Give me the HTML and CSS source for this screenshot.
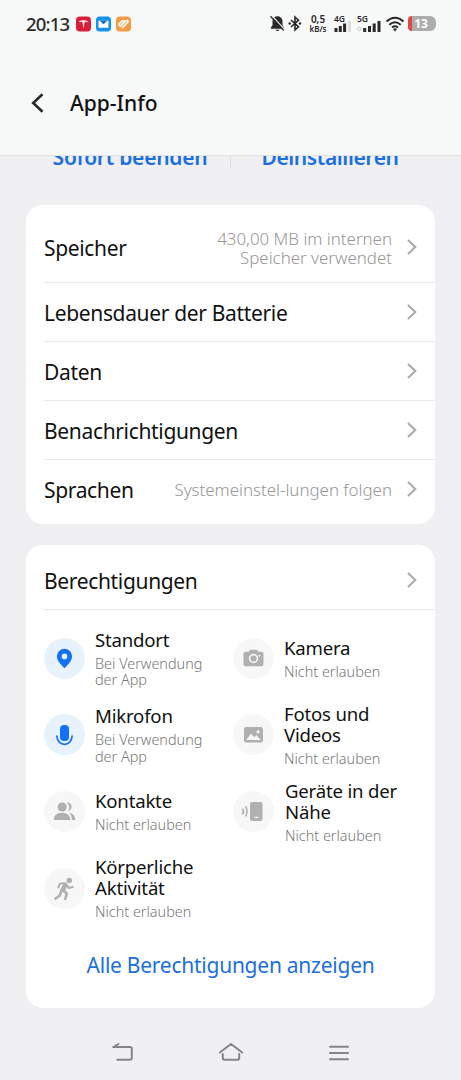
FILE: index.html
```html
<!DOCTYPE html>
<html lang="de">
<head>
<meta charset="utf-8">
<title>App-Info</title>
<link rel="stylesheet" href="styles.css">
</head>
<body>
<svg class="defs" width="0" height="0"><symbol id="chev" viewBox="0 0 12 18"><path d="M2 2l7.300 7L2 16" fill="none" stroke="#aaa" stroke-width="2"/></symbol></svg>
<div class="screen">
  <header class="header">
    <div class="status">
      <span class="clock">20:13</span>
      <svg class="badge" viewBox="0 0 16 16"><rect width="16" height="16" rx="4" fill="#d91f3c"/><path d="M3.300 5q4.700-2 9.400 0l-.6 1.200q-1.500-.8-2.800-.8L8 12.800 6.700 5.400q-1.300 0-2.800.8z" fill="#fff"/></svg>
      <svg class="badge" viewBox="0 0 16 16"><rect width="16" height="16" rx="4" fill="#1691ed"/><path d="M2.700 4.500h10.600v7.500H2.700z" fill="#fff"/><path d="M4 4.500h8L8 8.300z" fill="#1567bb"/></svg>
      <svg class="badge" viewBox="0 0 16 16"><rect width="16" height="16" rx="4" fill="#f59b43"/><path d="M3.300 7.800l2.900-3q1-1 2 0M3.300 7.800q-.3 1.500 1.300 2.500l5.600-5.600M6.700 12l6-6q.6-1.200-.7-1.800" fill="none" stroke="#fff" stroke-width="1.800" stroke-linecap="round"/></svg>
      <span class="spacer"></span>
      <svg class="bell" viewBox="0 0 15 17"><path d="M7.500 1.200a5 5 0 0 0-5 5v4L.8 12.800v1h13.400v-1l-1.700-2.600v-4a5 5 0 0 0-5-5zM5.500 14.700a2.100 1.700 0 0 0 4 0z" fill="#29292b"/><path d="M1.500.3l13.500 14.500" stroke="#f7f7f7" stroke-width="1.200"/><path d="M.5 1.300l13.300 14.200" stroke="#29292b" stroke-width="1.300"/></svg>
      <svg class="bt" viewBox="0 0 14 17"><path d="M3 5l7.500 6.800L7 15V2l3.500 3.200L3 12" fill="none" stroke="#29292b" stroke-width="1.600"/><circle cx="1.700" cy="8.500" r="1.200" fill="#29292b"/><circle cx="12" cy="8.500" r="1.200" fill="#29292b"/></svg>
      <span class="rate"><b>0,5</b><b class="unit">kB/s</b></span>
      <span class="cell cell4"><b>4G</b><svg viewBox="0 0 18 11"><path d="M2 7v4M6.300 5v6M10.600 2.500V11" stroke="#29292b" stroke-width="3"/><path d="M15.500 0v11" stroke="#ddd" stroke-width="3"/></svg></span>
      <span class="cell cell5"><b>5G</b><svg viewBox="0 0 24 11"><circle cx="2.200" cy="8" r="1.600" fill="none" stroke="#ccc"/><path d="M7.700 7v4M12.500 5v6M17.200 2.500V11M22 0v11" stroke="#29292b" stroke-width="3"/></svg></span>
      <svg class="wifi" viewBox="0 0 20 16"><path d="M1.500 5.500q8.500-7.500 17 0M4.300 8.700q5.700-4.800 11.400 0M7 11.500q3-2.400 6 0" fill="none" stroke="#29292b" stroke-width="1.900"/><path d="M8 13q2-1.500 4 0l-2 2.500z" fill="#29292b"/></svg>
      <span class="battery"><b>13</b></span>
    </div>
    <div class="title"><svg class="back" viewBox="0 0 13 20"><path d="M11.500 1.200L2.200 10l9.300 8.800" fill="none" stroke="#29292b" stroke-width="2.600"/></svg><h1>App-Info</h1></div>
  </header>
  <div class="actions"><span class="act stop">Sofort beenden</span><i></i><span class="act remove">Deinstallieren</span></div>

  <section class="card settings">
    <div class="row first"><span class="label">Speicher</span><span class="value">430,00 MB im internen<br>Speicher verwendet</span><svg class="chev"><use href="#chev"/></svg></div>
    <div class="row"><span class="label">Lebensdauer der Batterie</span><svg class="chev"><use href="#chev"/></svg></div>
    <div class="row"><span class="label">Daten</span><svg class="chev"><use href="#chev"/></svg></div>
    <div class="row"><span class="label">Benachrichtigungen</span><svg class="chev"><use href="#chev"/></svg></div>
    <div class="row"><span class="label">Sprachen</span><span class="value">Systemeinstel-lungen folgen</span><svg class="chev"><use href="#chev"/></svg></div>
  </section>

  <section class="card permissions">
    <div class="row"><span class="label">Berechtigungen</span><svg class="chev"><use href="#chev"/></svg></div>
    <div class="grid">
      <div class="perm on"><svg class="ico" viewBox="0 0 41 41"><path d="M20.500 10.700a7.600 7.600 0 0 0-7.600 7.600c0 4.700 4.400 8.500 7.600 12 3.200-3.500 7.600-7.300 7.600-12a7.600 7.600 0 0 0-7.600-7.600zm0 4.900a2.800 2.800 0 1 1 0 5.600 2.800 2.800 0 0 1 0-5.600z" fill="#1271f5"/></svg><div><h2>Standort</h2><p>Bei Verwendung<br>der App</p></div></div>
      <div class="perm"><svg class="ico" viewBox="0 0 41 41"><path d="M12.500 13.700h3.300l1.200-2h7l1.200 2h3.300q2 0 2 2v10.500q0 2-2 2h-16q-2 0-2-2V15.700q0-2 2-2z" fill="#b0b0b0"/><circle cx="20.500" cy="20.500" r="3.900" fill="none" stroke="#f7f7f7" stroke-width="1.600"/><circle cx="26.300" cy="17.700" r=".9" fill="#f7f7f7"/></svg><div><h2>Kamera</h2><p>Nicht erlauben</p></div></div>
      <div class="perm on"><svg class="ico" viewBox="0 0 41 41"><rect x="16" y="11" width="9" height="16" rx="4" fill="#1271f5"/><path d="M12.800 21.500c.4 11.700 15 11.700 15.400 0" fill="none" stroke="#1271f5" stroke-width="1.700"/></svg><div><h2>Mikrofon</h2><p>Bei Verwendung<br>der App</p></div></div>
      <div class="perm"><svg class="ico" viewBox="0 0 41 41"><rect x="11" y="13" width="19" height="15.500" rx="2" fill="#b0b0b0"/><path d="M13 26l5-6.200 3.300 3.500 2-2 4.500 4.700z" fill="#f7f7f7"/><circle cx="25" cy="17.800" r="1.600" fill="#f7f7f7"/></svg><div><h2>Fotos und<br>Videos</h2><p>Nicht erlauben</p></div></div>
      <div class="perm"><svg class="ico" viewBox="0 0 41 41"><g fill="#b0b0b0"><circle cx="18.200" cy="16" r="4.600"/><path d="M9.700 29q.5-7.300 8.300-7.300t8.500 7.300zM22.300 11.500c6.500-.8 7 7.300 1.600 9 2.200-3 2-6.400-1.600-9zM25 21.800q6 1 6.300 7.200h-3.400q0-5-2.900-7.200z"/></g></svg><div><h2>Kontakte</h2><p>Nicht erlauben</p></div></div>
      <div class="perm near"><svg class="ico" viewBox="0 0 41 41"><rect x="17" y="11" width="12.500" height="19" rx="2" fill="#b0b0b0"/><path d="M21.500 26.300h4" stroke="#f7f7f7" stroke-width="1.300"/><path d="M12.500 15.300q3 5 0 10M9.500 17.600q2 3 0 5.800" fill="none" stroke="#b0b0b0" stroke-width="1.600"/></svg><div><h2>Geräte in der<br>Nähe</h2><p>Nicht erlauben</p></div></div>
      <div class="perm"><svg class="ico" viewBox="0 0 41 41"><circle cx="25.300" cy="12.500" r="2.700" fill="#b0b0b0"/><g fill="none" stroke="#b0b0b0" stroke-linecap="round" stroke-linejoin="round"><path d="M21.300 17l-2.500 5" stroke-width="4.600"/><path d="M20.500 15.300l-4.500.3-1.700 3.700M22.500 16.800l2.300 3.200 4-1" stroke-width="2"/><path d="M19.500 22.500l3.300 3-1.500 5.300M17.500 22.500l-1.700 5-4.300 3" stroke-width="2.700"/></g></svg><div><h2>Körperliche<br>Aktivität</h2><p>Nicht erlauben</p></div></div>
    </div>
    <a class="all">Alle Berechtigungen anzeigen</a>
  </section>

  <nav class="nav">
    <svg viewBox="0 0 26 22"><path d="M9.500 2L4.300 5h16.700q1.800 0 1.800 1.800v9.200q0 1.800-1.800 1.800H8.300" /></svg>
    <svg viewBox="0 0 26 22"><path d="M1.800 10.500L13 2l11.200 8.500M4.800 12v4q0 1.800 1.800 1.800h12.800q1.800 0 1.800-1.800v-4"/></svg>
    <svg viewBox="0 0 26 22"><path d="M4 4.700h18M4 11h18M4 17.300h18"/></svg>
  </nav>
</div>
</body>
</html>
```
FILE: styles.css
```css
* { box-sizing: border-box; margin: 0; padding: 0; }
body { background: #f0f0f3; font-family: "Noto Sans", sans-serif; color: #111; }
.defs { display: block; }
.screen { width: 461px; height: 1080px; overflow: hidden; display: flex; flex-direction: column; background: #f0f0f3; }
svg { flex: none; }
.header { height: 156px; flex: none; background: #f7f8f8; border-bottom: 1px solid #e3e4e6; }
.status { height: 47px; padding: 0 25px 0 26px; display: flex; align-items: center; color: #29292b; }
.clock { font-size: 18.5px; font-weight: 500; letter-spacing: -.8px; width: 50px; white-space: nowrap; }
.badge { width: 15px; height: 16px; margin-right: 5px; }
.spacer { flex: 1; }
.bell { width: 15px; height: 17px; margin-right: 3px; }
.bt { width: 14px; height: 17px; margin-right: 7px; }
.rate { width: 18px; display: flex; flex-direction: column; align-items: center; font-size: 10px; line-height: 9px; margin-right: 7px; }
.unit { font-size: 8px; }
.rate b, .cell b { font-weight: 600; }
.cell { height: 17px; display: flex; flex-direction: column; font-size: 8.5px; line-height: 7px; }
.cell svg { height: 11px; margin-top: -1px; }
.cell4 { width: 18px; margin-right: 5px; }
.cell5 { width: 24px; margin-right: 4px; }
.cell4 svg { width: 18px; }
.cell5 svg { width: 24px; }
.wifi { width: 20px; height: 16px; margin-right: 3px; }
.battery { width: 28px; height: 15px; border-radius: 4px 6px 6px 4px; background: linear-gradient(90deg, #e6443f 4px, #adadad 4px); color: #fff; display: flex; align-items: center; justify-content: center; font-size: 12px; padding-right: 2px; }
.title { height: 111px; display: flex; align-items: center; padding-left: 31px; }
.back { width: 13px; height: 20px; margin-right: 26px; }
h1 { font-size: 21px; font-weight: 500; line-height: 28px; }
.actions { height: 49px; flex: none; display: flex; align-items: flex-start; overflow: hidden; }
.act { color: #1b6fe0; font-size: 21px; font-weight: 600; letter-spacing: -.25px; line-height: 28px; margin-top: -13px; width: 230px; text-align: center; white-space: nowrap; }
.stop { padding-left: 30px; }
.remove { padding-right: 32px; letter-spacing: -.4px; }
.actions i { width: 1px; height: 12px; background: #dddde0; flex: none; }
.card { margin: 0 26px; background: #fff; border-radius: 17px; flex: none; }
.settings { height: 319px; padding-top: 7px; margin-bottom: 21px; }
.permissions { height: 463px; padding-top: 6px; }
.row { height: 59px; margin-left: 18px; padding-right: 17px; display: flex; align-items: center; border-bottom: 1px solid #eaeaea; }
.row.first { height: 71px; }
.settings .row:last-child { border: 0; height: 58px; }
.label { font-size: 21px; letter-spacing: -.34px; line-height: 28px; padding-top: 2px; white-space: nowrap; }
.value { margin-left: auto; text-align: right; color: #969696; font-size: 16.9px; line-height: 19px; padding-top: 1px; font-weight: 300; white-space: nowrap; }
.chev { width: 12px; height: 18px; margin-left: auto; }
.value + .chev { margin-left: 14px; }
.grid { padding: 10px 0 0 18px; display: grid; grid-template-columns: 189px 200px; grid-auto-rows: 76.6px; }
.perm { display: flex; align-items: center; }
.perm > div { padding-top: 1px; }
.ico { width: 41px; height: 41px; border-radius: 50%; background: #f7f7f7; margin-right: 10px; }
.near .ico { margin-right: 11px; }
.on .ico { background: #e8f2fd; }
h2 { font-size: 18.6px; letter-spacing: -.2px; font-weight: 400; line-height: 21px; white-space: nowrap; }
p { font-size: 14.4px; font-weight: 300; line-height: 16.5px; color: #777; margin-top: 6px; white-space: nowrap; }
.all { display: block; text-align: center; font-size: 21px; letter-spacing: -.25px; line-height: 28px; margin-top: 25px; color: #1b6fe0; }
.nav { flex: 1; display: flex; justify-content: space-between; align-items: center; padding: 17px 109px 0; }
.nav svg { width: 26px; height: 22px; fill: none; stroke: #858588; stroke-width: 2; stroke-linecap: round; stroke-linejoin: round; }
```
